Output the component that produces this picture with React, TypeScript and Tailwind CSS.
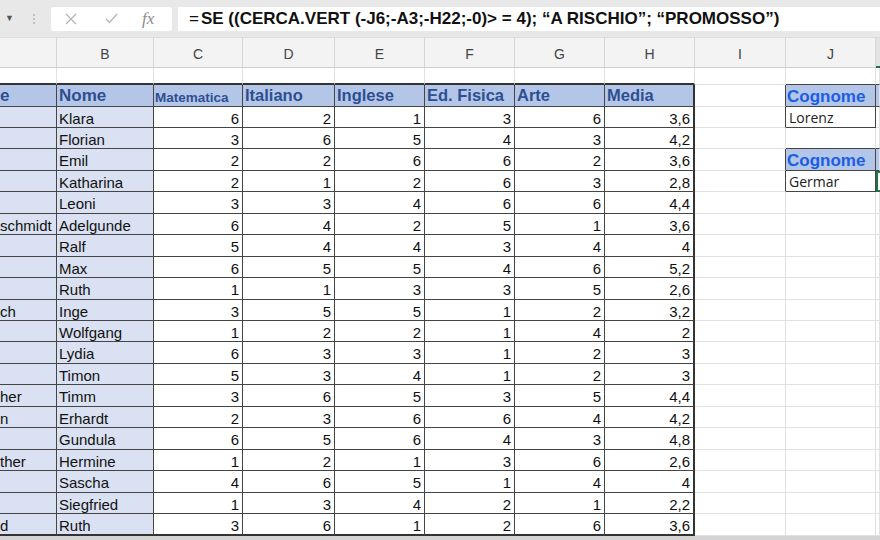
import React from "react";

type Row = {
  a: string;
  name: string;
  marks: number[];
  avg: string;
};

const ROWS: Row[] = [
  { a: "", name: "Klara", marks: [6, 2, 1, 3, 6], avg: "3,6" },
  { a: "", name: "Florian", marks: [3, 6, 5, 4, 3], avg: "4,2" },
  { a: "", name: "Emil", marks: [2, 2, 6, 6, 2], avg: "3,6" },
  { a: "", name: "Katharina", marks: [2, 1, 2, 6, 3], avg: "2,8" },
  { a: "", name: "Leoni", marks: [3, 3, 4, 6, 6], avg: "4,4" },
  { a: "schmidt", name: "Adelgunde", marks: [6, 4, 2, 5, 1], avg: "3,6" },
  { a: "", name: "Ralf", marks: [5, 4, 4, 3, 4], avg: "4" },
  { a: "", name: "Max", marks: [6, 5, 5, 4, 6], avg: "5,2" },
  { a: "", name: "Ruth", marks: [1, 1, 3, 3, 5], avg: "2,6" },
  { a: "ch", name: "Inge", marks: [3, 5, 5, 1, 2], avg: "3,2" },
  { a: "", name: "Wolfgang", marks: [1, 2, 2, 1, 4], avg: "2" },
  { a: "", name: "Lydia", marks: [6, 3, 3, 1, 2], avg: "3" },
  { a: "", name: "Timon", marks: [5, 3, 4, 1, 2], avg: "3" },
  { a: "her", name: "Timm", marks: [3, 6, 5, 3, 5], avg: "4,4" },
  { a: "n", name: "Erhardt", marks: [2, 3, 6, 6, 4], avg: "4,2" },
  { a: "", name: "Gundula", marks: [6, 5, 6, 4, 3], avg: "4,8" },
  { a: "ther", name: "Hermine", marks: [1, 2, 1, 3, 6], avg: "2,6" },
  { a: "", name: "Sascha", marks: [4, 6, 5, 1, 4], avg: "4" },
  { a: "", name: "Siegfried", marks: [1, 3, 4, 2, 1], avg: "2,2" },
  { a: "d", name: "Ruth", marks: [3, 6, 1, 2, 6], avg: "3,6" },
];

const LETTERS = ["", "B", "C", "D", "E", "F", "G", "H", "I", "J", ""];

const GRID =
  "grid grid-cols-[57px_97px_89px_92px_90px_90px_90px_90px_91px_90px_1fr]";

// rows of the little lookup tables in column J (r = 0 is the header row)
const J_HEAD = [0, 3];
const J_BODY: Record<number, string> = { 1: "Lorenz", 4: "Germar" };

function isJ(r: number) {
  return J_HEAD.includes(r) || r in J_BODY;
}

// rows are ~21.45px tall in the screenshot: mix 21 and 22 so borders stay crisp
function tall(i: number) {
  return Math.floor((i + 1) * 21.45) - Math.floor(i * 21.45) === 22;
}

function borders(r: number, c: number) {
  let right = "border-r border-r-[#e1e1e1]";
  let bottom = "border-b border-b-[#e1e1e1]";

  if (r >= 0 && c <= 7) {
    right = c === 7 ? "border-r-2 border-r-[#333]" : "border-r border-r-[#454545]";
    bottom = r === 20 ? "border-b-2 border-b-[#333]" : "border-b border-b-[#454545]";
  }
  if (r === -1 && c <= 7) bottom = "border-b-2 border-b-[#333]";

  if ((c === 8 || c === 9) && isJ(r)) right = "border-r border-r-[#454545]";
  if (c === 9 && (isJ(r) || isJ(r + 1))) bottom = "border-b border-b-[#454545]";
  if (c === 10 && J_HEAD.includes(r)) bottom = "border-b border-b-[#454545]";
  if (c === 10 && J_HEAD.includes(r + 1)) bottom = "border-b border-b-[#454545]";

  return right + " " + bottom;
}

function Toolbar() {
  return (
    <div className="flex h-[37px] items-center bg-[#e8e8e8]">
      <span className="ml-[5px] w-[8px] text-[9px] leading-none text-[#555]">▼</span>
      <div className="ml-[20px] flex flex-col gap-[2px]">
        <span className="block h-[2px] w-[2px] rounded-full bg-[#b5b5b5]" />
        <span className="block h-[2px] w-[2px] rounded-full bg-[#b5b5b5]" />
        <span className="block h-[2px] w-[2px] rounded-full bg-[#b5b5b5]" />
      </div>
      <div className="ml-[16px] flex h-[24px] w-[121px] items-center rounded-[3px] bg-white text-[#b0b0b0]">
        <svg className="ml-[14px]" width="12" height="12" viewBox="0 0 12 12">
          <path d="M1 1 L11 11 M11 1 L1 11" stroke="#b3b3b3" strokeWidth="1.2" fill="none" />
        </svg>
        <svg className="ml-[28px]" width="13" height="11" viewBox="0 0 13 11">
          <path d="M1 6 L4.5 9.5 L12 1" stroke="#b8b8b8" strokeWidth="1.5" fill="none" />
        </svg>
        <span className="ml-[24px] font-['Liberation_Serif',serif] text-[17px] italic leading-none text-[#8c8c8c]">
          fx
        </span>
      </div>
      <div className="ml-[6px] flex h-[24px] flex-1 items-center bg-white pl-[11px] font-['Liberation_Sans',Arial,sans-serif] text-[17px] text-[#111]">
        <span className="mr-[2px] font-normal">=</span>
        <span className="font-bold">
          SE ((CERCA.VERT (-J6;-A3;-H22;-0)&gt; = 4); “A RISCHIO”; “PROMOSSO”)
        </span>
      </div>
    </div>
  );
}

function ColumnHeaders() {
  return (
    <div className={GRID + " h-[31px] border-t border-t-[#dcdcdc] bg-[#f3f3f3]"}>
      {LETTERS.map((l, i) => (
        <div
          key={i}
          className={
            "flex items-center justify-center pt-[4px] text-[14px] text-[#444] " +
            (i === 10
              ? "border-b-2 border-b-[#217346] bg-[#e3e3e3]"
              : "border-r border-r-[#d6d6d6] border-b border-b-[#cfcfcf]")
          }
        >
          {l}
        </div>
      ))}
    </div>
  );
}

function HeaderRow() {
  const head = "bg-[#b4c6e7] font-bold text-[#2d4f92]";
  const titles = ["Italiano", "Inglese", "Ed. Fisica", "Arte", "Media"];
  return (
    <div className={GRID + " h-[22px]"}>
      <div className={head + " overflow-hidden whitespace-nowrap text-[17px] leading-[21px] " + borders(0, 0)}>
        e
      </div>
      <div className={head + " pl-[2px] text-[17px] leading-[21px] " + borders(0, 1)}>Nome</div>
      <div className={head + " flex items-end pb-[2px] pl-[1px] text-[13.5px] leading-none " + borders(0, 2)}>
        Matematica
      </div>
      {titles.map((t, i) => (
        <div key={t} className={head + " whitespace-nowrap pl-[2px] text-[16.5px] leading-[21px] " + borders(0, i + 3)}>
          {t}
        </div>
      ))}
      <div className={borders(0, 8)} />
      <JCell r={0} />
      <KCell r={0} />
    </div>
  );
}

function JCell({ r }: { r: number }) {
  if (J_HEAD.includes(r)) {
    return (
      <div className={"flex items-center bg-[#b4c6e7] pl-[1px] pt-[1px] text-[17px] font-bold leading-none text-[#1a5ee6] " + borders(r, 9)}>
        Cognome
      </div>
    );
  }
  if (r in J_BODY) {
    return (
      <div className={"flex items-center pl-[3px] pt-[2px] font-['Open_Sans',sans-serif] text-[14px] leading-none text-[#222] " + borders(r, 9)}>
        {J_BODY[r]}
      </div>
    );
  }
  return <div className={borders(r, 9)} />;
}

function KCell({ r }: { r: number }) {
  if (J_HEAD.includes(r)) return <div className={"bg-[#b4c6e7] " + borders(r, 10)} />;
  if (r === 4) return <div className="border-y-2 border-l-2 border-[#217346]" />;
  return <div className={borders(r, 10)} />;
}

function DataRow({ row, r }: { row: Row; r: number }) {
  const cell = "flex items-center pt-[2px] text-[15px] leading-none text-[#111] ";
  const num = cell + "justify-end pr-[3px] bg-white ";
  return (
    <div className={GRID + (tall(r - 1) ? " h-[22px]" : " h-[21px]")}>
      <div className={cell + "overflow-hidden whitespace-nowrap bg-[#d9e1f2] " + borders(r, 0)}>
        {row.a}
      </div>
      <div className={cell + "bg-[#d9e1f2] pl-[2px] " + borders(r, 1)}>{row.name}</div>
      {row.marks.map((m, i) => (
        <div key={i} className={num + borders(r, i + 2)}>
          {m}
        </div>
      ))}
      <div className={num + borders(r, 7)}>{row.avg}</div>
      <div className={borders(r, 8)} />
      <JCell r={r} />
      <KCell r={r} />
    </div>
  );
}

export default function App() {
  return (
    <div className="h-[540px] w-[880px] overflow-hidden bg-white font-['Liberation_Sans',Arial,sans-serif]">
      <Toolbar />
      <ColumnHeaders />
      <div className={GRID + " h-[17px]"}>
        {LETTERS.map((_, i) => (
          <div key={i} className={borders(-1, i)} />
        ))}
      </div>
      <HeaderRow />
      {ROWS.map((row, i) => (
        <DataRow key={i} row={row} r={i + 1} />
      ))}
      <div className="h-[6px] bg-[#d4d4d4]" />
    </div>
  );
}
